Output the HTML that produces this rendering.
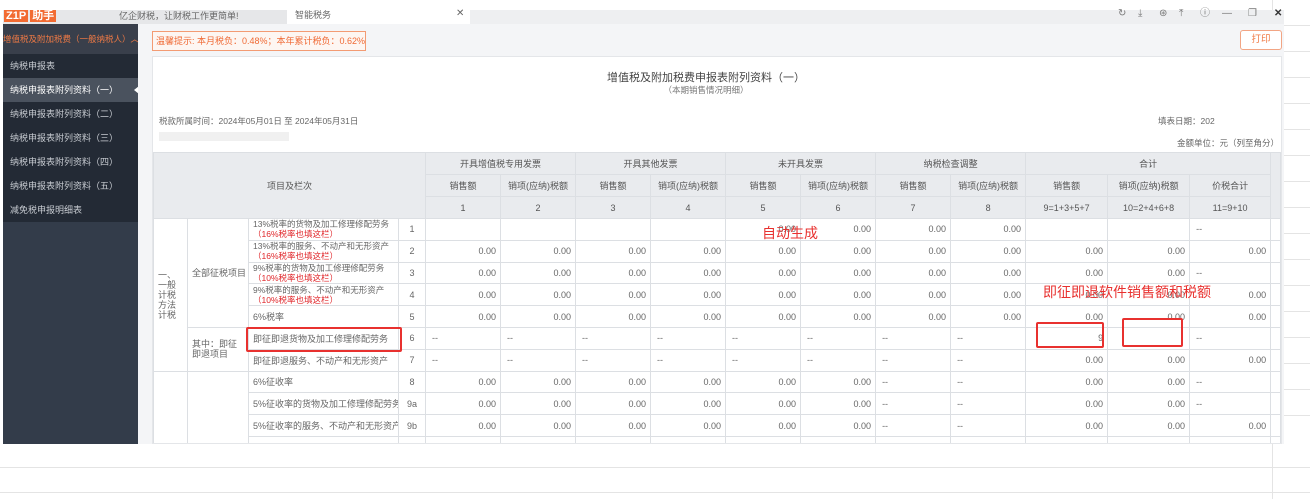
<!DOCTYPE html>
<html><head><meta charset="utf-8"><style>
*{margin:0;padding:0;box-sizing:border-box}
body{width:1310px;height:499px;overflow:hidden;background:#fff;font-family:"Liberation Sans","Noto Sans CJK SC",sans-serif;position:relative;color:#555}
.abs{position:absolute}
.gl{position:absolute;background:#e4e4e4}
table{border-collapse:collapse;table-layout:fixed;font-size:9px}
td{border:1px solid #dcdfe3;height:21.8px;padding:0 4px;color:#666;white-space:nowrap;overflow:hidden}
thead td{background:#e9ebee;text-align:center;color:#555;height:22px;font-weight:normal}
td.n{text-align:right}
td.c{text-align:center}
td.d{text-align:left;padding-left:6px}
td.it{line-height:10px;font-size:8.5px}
.r{color:#e0262a}
.side div{height:24px;line-height:24px;padding-left:7px;font-size:9px;color:#c8ccd2;white-space:nowrap;overflow:hidden}
</style></head><body>
<div class="gl" style="left:0;top:467px;width:1310px;height:1px"></div>
<div class="gl" style="left:0;top:492px;width:1310px;height:1px"></div>
<div class="gl" style="left:1284px;top:25px;width:26px;height:1px"></div>
<div class="gl" style="left:1284px;top:51px;width:26px;height:1px"></div>
<div class="gl" style="left:1284px;top:77px;width:26px;height:1px"></div>
<div class="gl" style="left:1284px;top:103px;width:26px;height:1px"></div>
<div class="gl" style="left:1284px;top:129px;width:26px;height:1px"></div>
<div class="gl" style="left:1284px;top:155px;width:26px;height:1px"></div>
<div class="gl" style="left:1284px;top:181px;width:26px;height:1px"></div>
<div class="gl" style="left:1284px;top:207px;width:26px;height:1px"></div>
<div class="gl" style="left:1284px;top:233px;width:26px;height:1px"></div>
<div class="gl" style="left:1284px;top:259px;width:26px;height:1px"></div>
<div class="gl" style="left:1284px;top:285px;width:26px;height:1px"></div>
<div class="gl" style="left:1284px;top:311px;width:26px;height:1px"></div>
<div class="gl" style="left:1284px;top:337px;width:26px;height:1px"></div>
<div class="gl" style="left:1284px;top:363px;width:26px;height:1px"></div>
<div class="gl" style="left:1284px;top:389px;width:26px;height:1px"></div>
<div class="gl" style="left:1284px;top:415px;width:26px;height:1px"></div>
<div class="gl" style="left:1272px;top:0;width:1px;height:10px"></div>
<div class="gl" style="left:1272px;top:444px;width:1px;height:55px"></div>

<div class="abs" style="left:3px;top:10px;width:1281px;height:14px;background:#eeeff1"></div>
<div class="abs" style="left:3px;top:10px;width:284px;height:14px;background:#e6e7e9"></div>
<div class="abs" style="left:4px;top:10px;height:12px;font-size:11px;line-height:12px;font-weight:bold;color:#fff;"><span style="background:#f26b32;padding:0 2px">Z1P</span><span style="background:#f26b32;margin-left:2px;padding:0 2px">助手</span></div>
<div class="abs" style="left:119px;top:10px;font-size:9px;line-height:12px;color:#666">亿企财税，让财税工作更简单!</div>
<div class="abs" style="left:287px;top:8px;width:183px;height:16px;background:#fff"></div>
<div class="abs" style="left:295px;top:9px;font-size:9px;line-height:12px;color:#666">智能税务</div>
<div class="abs" style="left:456px;top:8px;font-size:10px;line-height:12px;color:#666">✕</div>
<div class="abs" style="left:1118px;top:8px;font-size:10px;line-height:12px;color:#777">
<span style="position:absolute;left:0">↻</span><span style="position:absolute;left:20px">⤓</span><span style="position:absolute;left:41px">⊛</span><span style="position:absolute;left:61px">⤒</span><span style="position:absolute;left:82px">ⓘ</span><span style="position:absolute;left:104px">—</span><span style="position:absolute;left:130px">❐</span><span style="position:absolute;left:156px;color:#333;font-weight:bold">✕</span></div>

<div class="abs side" style="left:3px;top:24px;width:135px;height:420px;background:#333c4a">
<div style="height:30px;line-height:30px;padding-left:0;color:#f07a45;background:#393f4b;font-size:8.5px">增值税及附加税费（一般纳税人）︿</div>
<div style="background:#232a35">纳税申报表</div>
<div style="background:#4a525e;color:#fff">纳税申报表附列资料（一）</div>
<div style="background:#232a35">纳税申报表附列资料（二）</div>
<div style="background:#232a35">纳税申报表附列资料（三）</div>
<div style="background:#232a35">纳税申报表附列资料（四）</div>
<div style="background:#232a35">纳税申报表附列资料（五）</div>
<div style="background:#232a35">减免税申报明细表</div>
</div>
<div class="abs" style="left:134px;top:86px;width:0;height:0;border-top:4px solid transparent;border-bottom:4px solid transparent;border-right:5px solid #fff"></div>

<div class="abs" style="left:138px;top:24px;width:1146px;height:420px;background:#f4f5f7"></div>
<div class="abs" style="left:152px;top:31px;width:214px;height:20px;border:1px solid #f39b73;color:#f06a35;font-size:9px;line-height:18px;padding-left:3px;background:#fdf6f2;white-space:nowrap;overflow:hidden">温馨提示: 本月税负：0.48%；本年累计税负：0.62%</div>
<div class="abs" style="left:1240px;top:30px;width:42px;height:20px;border:1px solid #f2a584;border-radius:3px;color:#f07a45;font-size:9.5px;line-height:18px;text-align:center;background:#fff">打印</div>

<div class="abs" style="left:152px;top:56px;width:1130px;height:388px;background:#fff;border:1px solid #e4e6e9;overflow:hidden">
<div class="abs" style="left:0;top:12px;width:1106px;text-align:center;font-size:11px;color:#444">增值税及附加税费申报表附列资料（一）</div>
<div class="abs" style="left:0;top:27px;width:1106px;text-align:center;font-size:8.5px;color:#777">（本期销售情况明细）</div>
<div class="abs" style="left:6px;top:58px;font-size:8.5px;color:#666">税款所属时间：2024年05月01日 至 2024年05月31日</div>
<div class="abs" style="left:6px;top:75px;width:130px;height:9px;background:#ececec;opacity:.8"></div>
<div class="abs" style="left:1005px;top:58px;font-size:8.5px;color:#666">填表日期：202</div>
<div class="abs" style="left:1024px;top:80px;font-size:8.5px;color:#666">金额单位：元（列至角分）</div>

<table class="abs" style="left:0;top:95px;width:1127px">
<colgroup><col style="width:34px"><col style="width:61px"><col style="width:150px"><col style="width:27px">
<col style="width:75px"><col style="width:75px"><col style="width:75px"><col style="width:75px"><col style="width:75px"><col style="width:75px"><col style="width:75px"><col style="width:75px">
<col style="width:82px"><col style="width:82px"><col style="width:81px"><col style="width:10px"></colgroup>
<thead>
<tr><td colspan="4" rowspan="3">项目及栏次</td><td colspan="2">开具增值税专用发票</td><td colspan="2">开具其他发票</td><td colspan="2">未开具发票</td><td colspan="2">纳税检查调整</td><td colspan="3">合计</td><td rowspan="3"></td></tr>
<tr><td>销售额</td><td>销项(应纳)税额</td><td>销售额</td><td>销项(应纳)税额</td><td>销售额</td><td>销项(应纳)税额</td><td>销售额</td><td>销项(应纳)税额</td><td>销售额</td><td>销项(应纳)税额</td><td>价税合计</td></tr>
<tr><td>1</td><td>2</td><td>3</td><td>4</td><td>5</td><td>6</td><td>7</td><td>8</td><td>9=1+3+5+7</td><td>10=2+4+6+8</td><td>11=9+10</td></tr>
</thead>
<tbody>
<tr><td rowspan="7" style="white-space:normal;line-height:10px;padding:0 4px;vertical-align:middle">一、一般计税方法计税</td><td rowspan="5">全部征税项目</td><td class="it">13%税率的货物及加工修理修配劳务<br><span class="r">（16%税率也填这栏）</span></td><td class="c">1</td><td></td><td></td><td></td><td></td><td class="n">0.00</td><td class="n">0.00</td><td class="n">0.00</td><td class="n">0.00</td><td></td><td></td><td class="d">--</td><td></td></tr>
<tr><td class="it">13%税率的服务、不动产和无形资产<br><span class="r">（16%税率也填这栏）</span></td><td class="c">2</td><td class="n">0.00</td><td class="n">0.00</td><td class="n">0.00</td><td class="n">0.00</td><td class="n">0.00</td><td class="n">0.00</td><td class="n">0.00</td><td class="n">0.00</td><td class="n">0.00</td><td class="n">0.00</td><td class="n">0.00</td><td></td></tr>
<tr><td class="it">9%税率的货物及加工修理修配劳务<br><span class="r">（10%税率也填这栏）</span></td><td class="c">3</td><td class="n">0.00</td><td class="n">0.00</td><td class="n">0.00</td><td class="n">0.00</td><td class="n">0.00</td><td class="n">0.00</td><td class="n">0.00</td><td class="n">0.00</td><td class="n">0.00</td><td class="n">0.00</td><td class="d">--</td><td></td></tr>
<tr><td class="it">9%税率的服务、不动产和无形资产<br><span class="r">（10%税率也填这栏）</span></td><td class="c">4</td><td class="n">0.00</td><td class="n">0.00</td><td class="n">0.00</td><td class="n">0.00</td><td class="n">0.00</td><td class="n">0.00</td><td class="n">0.00</td><td class="n">0.00</td><td class="n">0.00</td><td class="n">0.00</td><td class="n">0.00</td><td></td></tr>
<tr><td>6%税率</td><td class="c">5</td><td class="n">0.00</td><td class="n">0.00</td><td class="n">0.00</td><td class="n">0.00</td><td class="n">0.00</td><td class="n">0.00</td><td class="n">0.00</td><td class="n">0.00</td><td class="n">0.00</td><td class="n">0.00</td><td class="n">0.00</td><td></td></tr>
<tr><td rowspan="2" style="white-space:normal;line-height:10px">其中：即征即退项目</td><td>即征即退货物及加工修理修配劳务</td><td class="c">6</td><td class="d">--</td><td class="d">--</td><td class="d">--</td><td class="d">--</td><td class="d">--</td><td class="d">--</td><td class="d">--</td><td class="d">--</td><td class="n">9</td><td></td><td class="d">--</td><td></td></tr>
<tr><td>即征即退服务、不动产和无形资产</td><td class="c">7</td><td class="d">--</td><td class="d">--</td><td class="d">--</td><td class="d">--</td><td class="d">--</td><td class="d">--</td><td class="d">--</td><td class="d">--</td><td class="n">0.00</td><td class="n">0.00</td><td class="n">0.00</td><td></td></tr>
<tr><td rowspan="4"></td><td rowspan="4"></td><td>6%征收率</td><td class="c">8</td><td class="n">0.00</td><td class="n">0.00</td><td class="n">0.00</td><td class="n">0.00</td><td class="n">0.00</td><td class="n">0.00</td><td class="d">--</td><td class="d">--</td><td class="n">0.00</td><td class="n">0.00</td><td class="d">--</td><td></td></tr>
<tr><td>5%征收率的货物及加工修理修配劳务</td><td class="c">9a</td><td class="n">0.00</td><td class="n">0.00</td><td class="n">0.00</td><td class="n">0.00</td><td class="n">0.00</td><td class="n">0.00</td><td class="d">--</td><td class="d">--</td><td class="n">0.00</td><td class="n">0.00</td><td class="d">--</td><td></td></tr>
<tr><td>5%征收率的服务、不动产和无形资产</td><td class="c">9b</td><td class="n">0.00</td><td class="n">0.00</td><td class="n">0.00</td><td class="n">0.00</td><td class="n">0.00</td><td class="n">0.00</td><td class="d">--</td><td class="d">--</td><td class="n">0.00</td><td class="n">0.00</td><td class="n">0.00</td><td></td></tr>
<tr><td>4%征收率</td><td class="c">10</td><td class="n">0.00</td><td class="n">0.00</td><td class="n">0.00</td><td class="n">0.00</td><td class="n">0.00</td><td class="n">0.00</td><td class="d">--</td><td class="d">--</td><td class="n">0.00</td><td class="n">0.00</td><td class="n">0.00</td><td></td></tr>
</tbody></table>
</div>

<div class="abs" style="left:762px;top:224px;font-size:14px;color:#e8312f;line-height:18px">自动生成</div>
<div class="abs" style="left:1043px;top:283px;font-size:14px;color:#e8312f;line-height:18px">即征即退软件销售额和税额</div>
<div class="abs" style="left:246px;top:327px;width:156px;height:25px;border:2px solid #e8312f;border-radius:2px"></div>
<div class="abs" style="left:1036px;top:322px;width:68px;height:26px;border:2px solid #e8312f;border-radius:2px"></div>
<div class="abs" style="left:1122px;top:318px;width:61px;height:29px;border:2px solid #e8312f;border-radius:2px"></div>
</body></html>
